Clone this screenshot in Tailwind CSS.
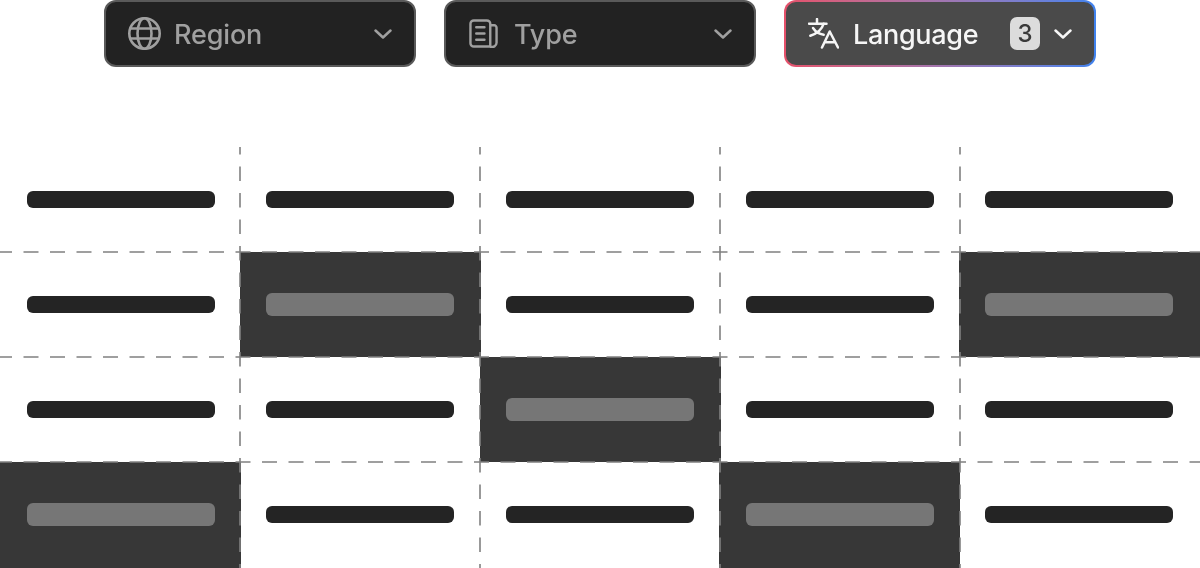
<!DOCTYPE html>
<html lang="en">
<head>
    <meta charset="UTF-8">
    <title>Filters</title>
    <script src="https://cdn.jsdelivr.net/npm/@tailwindcss/browser@4"></script>
</head>
<body class="bg-white w-[1200px] h-[568px] overflow-hidden font-['Inter',sans-serif]">
    <!-- Filter buttons -->
    <div class="flex justify-center gap-[28px] h-[67px]">
        <button class="w-[312px] h-[67px] flex items-center pl-[22px] pr-[22px] bg-[#222222] border-2 border-[#5a5a5a] rounded-[12px] text-[#a0a0a0]">
            <svg class="w-[33px] h-[33px] mr-[13px]" viewBox="0 0 33 33" fill="none" stroke="currentColor" stroke-width="2.6">
                <circle cx="16.5" cy="16.5" r="15.2"/>
                <ellipse cx="16.5" cy="16.5" rx="7" ry="15.2"/>
                <path d="M2.8 11.5h27.4M2.8 21.5h27.4"/>
            </svg>
            <span class="pt-[2px] text-[27px] font-[450] tracking-[-0.15px] leading-none will-change-transform">Region</span>
            <svg class="w-[18px] h-[10px] ml-auto" viewBox="0 0 18 10" fill="none" stroke="currentColor" stroke-width="2.5" stroke-linecap="round" stroke-linejoin="round">
                <path d="M1.5 1.5 9 8.5l7.5-7"/>
            </svg>
        </button>
        <button class="w-[312px] h-[67px] flex items-center pl-[23px] pr-[22px] bg-[#222222] border-2 border-[#5a5a5a] rounded-[12px] text-[#a0a0a0]">
            <svg class="w-[29px] h-[29px] mr-[16px]" viewBox="0 0 30 30" fill="none" stroke="currentColor" stroke-width="2.5" stroke-linecap="round" stroke-linejoin="round">
                <path d="M22 28.500H5a3.500 3.500 0 0 1-3.500-3.500V5A3.500 3.500 0 0 1 5 1.500h13.500A3.500 3.500 0 0 1 22 5v23.500a4.500 4.500 0 0 0 6.500-4V9A2.500 2.500 0 0 0 26 6.500h-4"/>
                <path d="M7.500 8.500h8.500M7.500 15h8.500M7.500 21.500h8.500"/>
            </svg>
            <span class="pt-[2px] text-[27px] font-[450] tracking-[-0.15px] leading-none will-change-transform">Type</span>
            <svg class="w-[18px] h-[10px] ml-auto" viewBox="0 0 18 10" fill="none" stroke="currentColor" stroke-width="2.5" stroke-linecap="round" stroke-linejoin="round">
                <path d="M1.5 1.5 9 8.5l7.5-7"/>
            </svg>
        </button>
        <div class="w-[312px] h-[67px] p-[2px] rounded-[12px] bg-gradient-to-r from-[#e5506a] to-[#3f82ee]">
            <button class="w-full h-full flex items-center pl-[22px] pr-[22px] bg-[#4a4a4a] rounded-[10px] text-[#f6f6f6]">
                <svg class="w-[31px] h-[31px] mr-[14px]" viewBox="0 0 31 31" fill="none" stroke="currentColor" stroke-width="2.5" stroke-linecap="round" stroke-linejoin="round">
                    <path d="M1 5.700h17.500M9 1v4.700"/>
                    <path d="M15.700 5.700C14 11 9 15.700 2.300 17.700M5 10c2 3 6 6 10.700 6.700"/>
                    <path d="M14 29.500l7.700-16 8.300 16M16.700 24.300h10.600"/>
                </svg>
                <span class="pt-[2px] text-[27px] font-[450] tracking-[-0.3px] leading-none will-change-transform">Language</span>
                <span class="ml-auto w-[30px] h-[33px] flex items-center justify-center rounded-[7px] bg-[#dcdcdc] text-[#3a3a3a] text-[24px] font-medium leading-none will-change-transform">3</span>
                <svg class="w-[18px] h-[10px] ml-[14px]" viewBox="0 0 18 10" fill="none" stroke="currentColor" stroke-width="2.5" stroke-linecap="round" stroke-linejoin="round">
                    <path d="M1.5 1.5 9 8.5l7.5-7"/>
                </svg>
            </button>
        </div>
    </div>

    <!-- Table -->
    <div class="relative mt-[80px] w-[1200px] h-[421px]">
        <div class="grid grid-cols-[241px_239px_240px_239px_241px] grid-rows-[105px_105px_105px_106px]">
            <div class="flex items-center justify-center"><div class="w-[188px] h-[17px] rounded-[6px] bg-[#242424]"></div></div>
            <div class="flex items-center justify-center"><div class="w-[188px] h-[17px] mr-[1px] rounded-[6px] bg-[#242424]"></div></div>
            <div class="flex items-center justify-center"><div class="w-[188px] h-[17px] rounded-[6px] bg-[#242424]"></div></div>
            <div class="flex items-center justify-center"><div class="w-[188px] h-[17px] rounded-[6px] bg-[#242424]"></div></div>
            <div class="flex items-center justify-center"><div class="w-[188px] h-[17px] mr-[1px] rounded-[6px] bg-[#242424]"></div></div>

            <div class="flex items-center justify-center"><div class="w-[188px] h-[17px] rounded-[6px] bg-[#242424]"></div></div>
            <div class="flex items-center justify-center bg-[#373737] ml-[-1px] mr-[-1px]"><div class="w-[188px] h-[23px] mr-[1px] rounded-[6px] bg-[#767676]"></div></div>
            <div class="flex items-center justify-center"><div class="w-[188px] h-[17px] rounded-[6px] bg-[#242424]"></div></div>
            <div class="flex items-center justify-center"><div class="w-[188px] h-[17px] rounded-[6px] bg-[#242424]"></div></div>
            <div class="flex items-center justify-center bg-[#373737]"><div class="w-[188px] h-[23px] mr-[1px] rounded-[6px] bg-[#767676]"></div></div>

            <div class="flex items-center justify-center"><div class="w-[188px] h-[17px] rounded-[6px] bg-[#242424]"></div></div>
            <div class="flex items-center justify-center"><div class="w-[188px] h-[17px] mr-[1px] rounded-[6px] bg-[#242424]"></div></div>
            <div class="flex items-center justify-center bg-[#373737] mr-[-1px]"><div class="w-[188px] h-[23px] mr-[1px] rounded-[6px] bg-[#767676]"></div></div>
            <div class="flex items-center justify-center"><div class="w-[188px] h-[17px] rounded-[6px] bg-[#242424]"></div></div>
            <div class="flex items-center justify-center"><div class="w-[188px] h-[17px] mr-[1px] rounded-[6px] bg-[#242424]"></div></div>

            <div class="flex items-center justify-center bg-[#373737]"><div class="w-[188px] h-[23px] mb-[1px] rounded-[6px] bg-[#767676]"></div></div>
            <div class="flex items-center justify-center"><div class="w-[188px] h-[17px] mr-[1px] mb-[1px] rounded-[6px] bg-[#242424]"></div></div>
            <div class="flex items-center justify-center"><div class="w-[188px] h-[17px] mb-[1px] rounded-[6px] bg-[#242424]"></div></div>
            <div class="flex items-center justify-center bg-[#373737] ml-[-1px] mr-[-1px]"><div class="w-[188px] h-[23px] mb-[1px] rounded-[6px] bg-[#767676]"></div></div>
            <div class="flex items-center justify-center"><div class="w-[188px] h-[17px] mr-[1px] mb-[1px] rounded-[6px] bg-[#242424]"></div></div>
        </div>

        <!-- Dashed grid lines -->
        <svg class="absolute left-0 top-0 w-[1200px] h-[421px]" viewBox="0 0 1200 421" fill="none" stroke="#808080" stroke-width="1.6">
            <g stroke-dasharray="14.500 12" stroke-dashoffset="7">
                <path d="M240 0V421M480 0V421M720 0V421M960 0V421"/>
            </g>
            <g stroke-dasharray="15 11.500" stroke-dashoffset="3">
                <path d="M0 105H1200M0 210H1200M0 315H1200"/>
            </g>
        </svg>
    </div>
</body>
</html>
